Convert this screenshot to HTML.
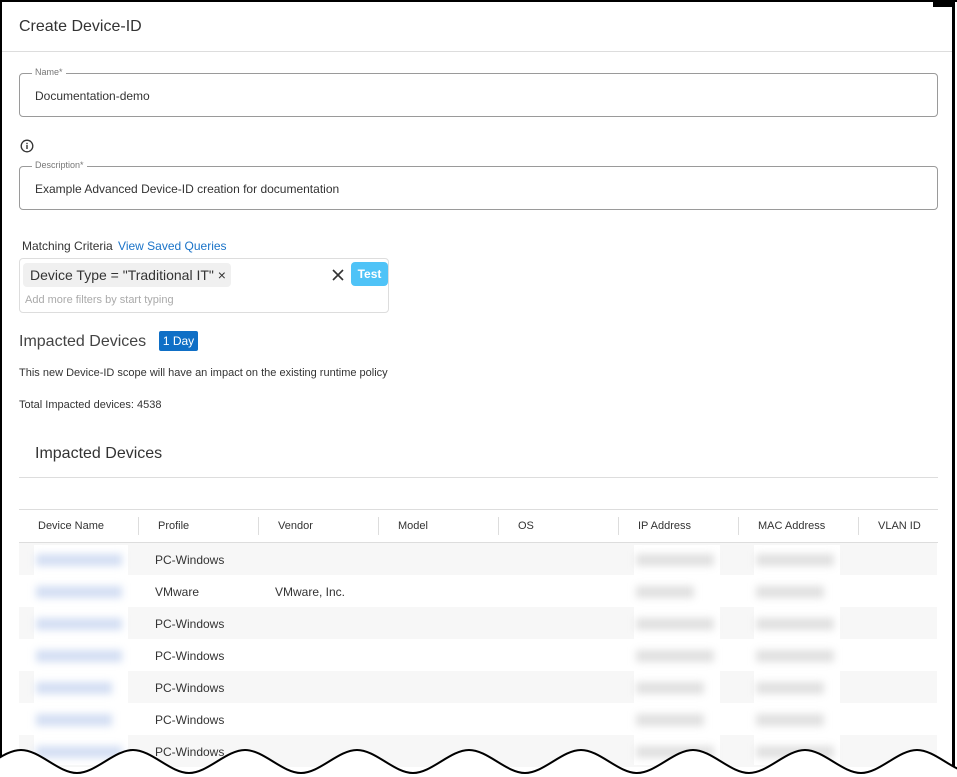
<!DOCTYPE html>
<html><head><meta charset="utf-8"><style>
*{margin:0;padding:0;box-sizing:border-box}
body{width:957px;height:777px;overflow:hidden;background:#fff;font-family:"Liberation Sans",sans-serif;color:#333;position:relative}
.a{position:absolute;white-space:nowrap}
.fld{position:absolute;border:1px solid #9a9a9a;border-radius:4px}
.lbl{position:absolute;top:-7px;left:12px;background:#fff;padding:0 3px;font-size:9px;color:#777}
.th{position:absolute;top:520px;font-size:11px;color:#333}
.sep{position:absolute;top:517px;width:1px;height:18px;background:#ddd}
.row{position:absolute;left:19px;width:918px;height:32px}
.cell{position:absolute;font-size:12px;color:#333}
.bl{position:absolute;background:#fff;height:30px}
.bl i{position:absolute;left:2px;right:6px;top:10px;height:12px;background:#d3def3;filter:blur(4px)}
.gr i{background:#e0e0e0}
</style></head><body>
<div class="a" style="left:0;top:0;width:957px;height:2px;background:#000"></div>
<div class="a" style="left:0;top:0;width:2px;height:777px;background:#000"></div>
<div class="a" style="left:952px;top:0;width:3px;height:777px;background:#000"></div>
<div class="a" style="left:933px;top:2px;width:20px;height:5px;background:#000"></div>

<div class="a" style="left:19px;top:18px;font-size:16px;color:#333">Create Device-ID</div>
<div class="a" style="left:2px;top:51px;width:950px;height:1px;background:#ddd"></div>

<div class="fld" style="left:19px;top:73px;width:919px;height:44px"><span class="lbl">Name*</span>
<span class="a" style="left:15px;top:15px;font-size:12px">Documentation-demo</span></div>

<svg class="a" style="left:20px;top:139px" width="14" height="14" viewBox="0 0 14 14"><circle cx="7" cy="7" r="5.8" fill="none" stroke="#333" stroke-width="1.3"/><rect x="6.3" y="6" width="1.4" height="4" fill="#333"/><rect x="6.3" y="3.8" width="1.4" height="1.4" fill="#333"/></svg>

<div class="fld" style="left:19px;top:166px;width:919px;height:44px"><span class="lbl">Description*</span>
<span class="a" style="left:15px;top:15px;font-size:12px">Example Advanced Device-ID creation for documentation</span></div>

<div class="a" style="left:22px;top:239px;font-size:12px;color:#333">Matching Criteria <span style="color:#1a73c8;margin-left:2px">View Saved Queries</span></div>
<div class="fld" style="left:19px;top:258px;width:370px;height:55px;border-color:#ddd">
<div class="a" style="left:3px;top:4px;width:208px;height:24px;background:#f0f0f0;border-radius:4px;font-size:14px;color:#333;padding:4px 0 0 7px">Device Type = "Traditional IT" ×</div>
<svg class="a" style="left:312px;top:10px" width="12" height="12" viewBox="0 0 12 12"><path d="M1 1L11 11M11 1L1 11" stroke="#333" stroke-width="1.6"/></svg>
<div class="a" style="left:331px;top:3px;width:37px;height:24px;background:#4fc3f7;border-radius:4px;color:#fff;font-size:12px;font-weight:bold;text-align:center;line-height:24px">Test</div>
<div class="a" style="left:5px;top:35px;font-size:11px;color:#aaa">Add more filters by start typing</div>
</div>

<div class="a" style="left:19px;top:333px;font-size:16px;color:#444">Impacted Devices</div>
<div class="a" style="left:159px;top:331px;width:39px;height:20px;background:#0f6fc6;border-radius:2px;color:#fff;font-size:12px;text-align:center;line-height:20px">1 Day</div>
<div class="a" style="left:19px;top:367px;font-size:11px;color:#333">This new Device-ID scope will have an impact on the existing runtime policy</div>
<div class="a" style="left:19px;top:399px;font-size:11px;color:#333">Total Impacted devices: 4538</div>

<div class="a" style="left:35px;top:445px;font-size:16px;color:#333">Impacted Devices</div>
<div class="a" style="left:19px;top:477px;width:919px;height:1px;background:#ddd"></div>
<div class="a" style="left:19px;top:509px;width:919px;height:1px;background:#ddd"></div>
<div class="a" style="left:19px;top:542px;width:919px;height:1px;background:#ddd"></div>

<div class="th" style="left:38px">Device Name</div><div class="sep" style="left:138px"></div>
<div class="th" style="left:158px">Profile</div><div class="sep" style="left:258px"></div>
<div class="th" style="left:278px">Vendor</div><div class="sep" style="left:378px"></div>
<div class="th" style="left:398px">Model</div><div class="sep" style="left:498px"></div>
<div class="th" style="left:518px">OS</div><div class="sep" style="left:618px"></div>
<div class="th" style="left:638px">IP Address</div><div class="sep" style="left:738px"></div>
<div class="th" style="left:758px">MAC Address</div><div class="sep" style="left:858px"></div>
<div class="th" style="left:878px">VLAN ID</div>

<div class="row" style="top:543px;background:#f7f7f7"></div>
<div class="row" style="top:607px;background:#f7f7f7"></div>
<div class="row" style="top:671px;background:#f7f7f7"></div>
<div class="row" style="top:735px;background:#f7f7f7"></div>

<div class="bl" style="left:34px;top:545px;width:94px;height:220px"><i style="top:9px"></i><i style="top:41px"></i><i style="top:73px"></i><i style="top:105px"></i><i style="top:137px;right:16px"></i><i style="top:169px;right:16px"></i><i style="top:201px"></i></div>
<div class="bl gr" style="left:634px;top:545px;width:86px;height:220px"><i style="top:9px"></i><i style="top:41px;right:26px"></i><i style="top:73px"></i><i style="top:105px"></i><i style="top:137px;right:16px"></i><i style="top:169px;right:16px"></i><i style="top:201px"></i></div>
<div class="bl gr" style="left:754px;top:545px;width:86px;height:220px"><i style="top:9px"></i><i style="top:41px;right:16px"></i><i style="top:73px"></i><i style="top:105px"></i><i style="top:137px;right:16px"></i><i style="top:169px;right:16px"></i><i style="top:201px"></i></div>

<div class="cell" style="left:155px;top:553px">PC-Windows</div>
<div class="cell" style="left:155px;top:585px">VMware</div>
<div class="cell" style="left:275px;top:585px">VMware, Inc.</div>
<div class="cell" style="left:155px;top:617px">PC-Windows</div>
<div class="cell" style="left:155px;top:649px">PC-Windows</div>
<div class="cell" style="left:155px;top:681px">PC-Windows</div>
<div class="cell" style="left:155px;top:713px">PC-Windows</div>
<div class="cell" style="left:155px;top:745px">PC-Windows</div>

<svg class="a" style="left:0;top:0" width="957" height="777" viewBox="0 0 957 777">
<path d="M -35 773 C -16.4 773 2.4 750 21 750 S 58.4 773 77 773 S 114.4 750 133 750 S 170.4 773 189 773 S 226.4 750 245 750 S 282.4 773 301 773 S 338.4 750 357 750 S 394.4 773 413 773 S 450.4 750 469 750 S 506.4 773 525 773 S 562.4 750 581 750 S 618.4 773 637 773 S 674.4 750 693 750 S 730.4 773 749 773 S 786.4 750 805 750 S 842.4 773 861 773 S 898.4 750 917 750 S 954.4 773 973 773 L 973 800 L -35 800 Z" fill="#fff" stroke="#000" stroke-width="2"/>
</svg>
</body></html>
